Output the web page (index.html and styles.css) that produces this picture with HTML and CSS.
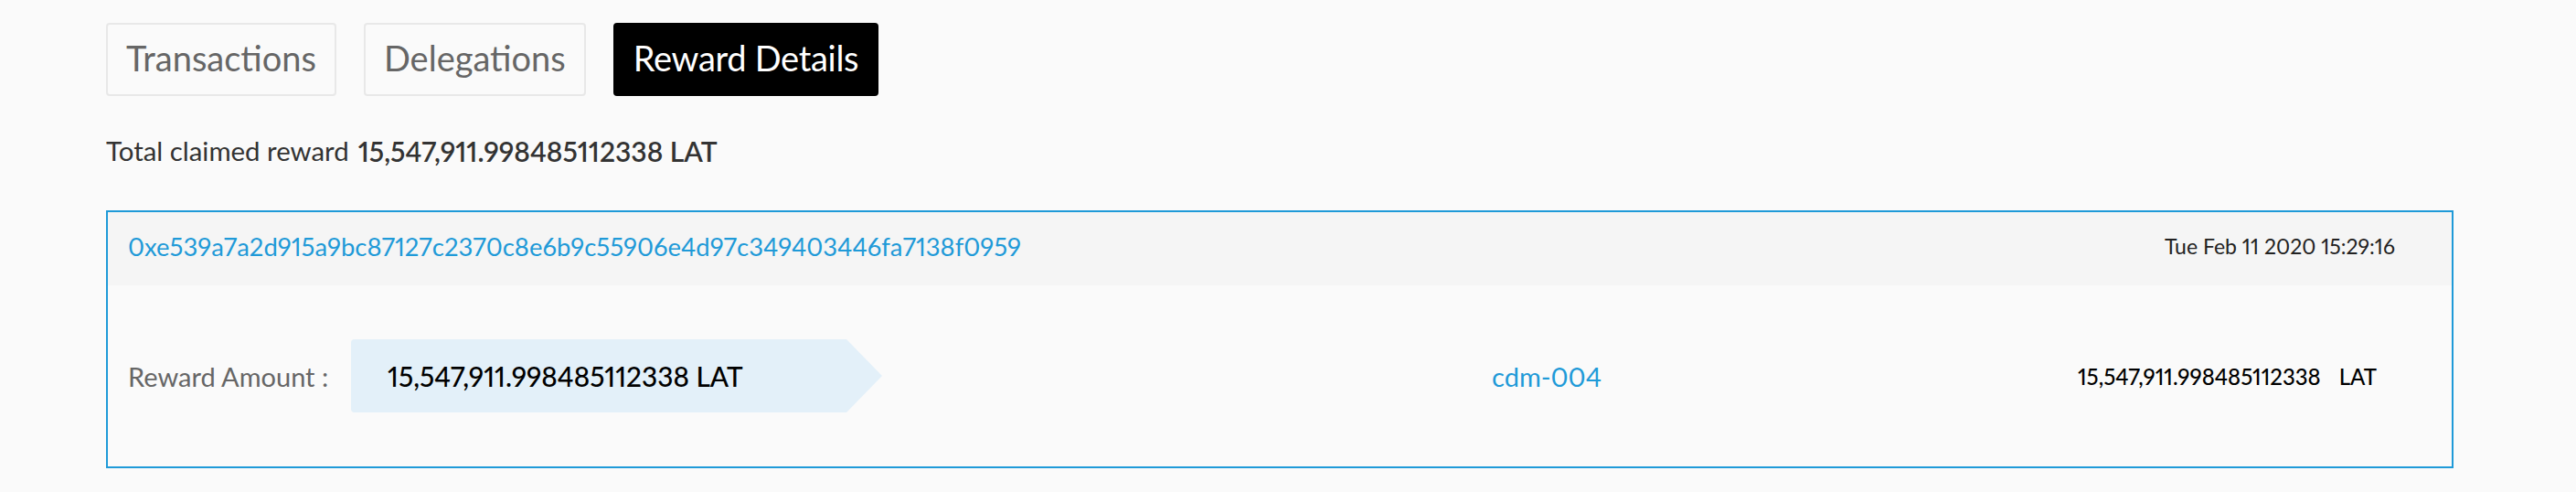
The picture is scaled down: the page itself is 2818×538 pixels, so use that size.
FILE: index.html
```html
<!DOCTYPE html>
<html lang="en">
<head>
<meta charset="utf-8">
<title>Reward Details</title>
<link rel="stylesheet" href="styles.css">
</head>
<body>
<div class="page">
  <nav class="tabs">
    <button class="tab">Transactions</button>
    <button class="tab">Delegations</button>
    <button class="tab tab--active">Reward Details</button>
  </nav>
  <div class="summary">
    <span class="summary__label">Total claimed reward</span>
    <span class="summary__value">15,547,911.998485112338 LAT</span>
  </div>
  <section class="reward-card">
    <header class="reward-card__head">
      <a class="hash">0xe539a7a2d915a9bc87127c2370c8e6b9c55906e4d97c349403446fa7138f0959</a>
      <span class="time">Tue Feb 11 2020 15:29:16</span>
    </header>
    <div class="reward-card__body">
      <span class="amount-label">Reward Amount :</span>
      <div class="amount-flag">15,547,911.998485112338 LAT</div>
      <a class="node">cdm-004</a>
      <span class="node-amount">15,547,911.998485112338<span class="unit">LAT</span></span>
    </div>
  </section>
</div>
</body>
</html>
```

FILE: styles.css
```css
html, body {
  margin: 0;
}

body {
  background: #fafafa;
  font-family: Lato, "Open Sans", sans-serif;
  font-variant-numeric: proportional-nums;
}

.page {
  padding: 25px 134px 26px 116px;
}

.tabs {
  display: flex;
  gap: 30px;
}

.tab {
  height: 80px;
  padding: 0 20px 4px;
  border: 2px solid #e8e8e8;
  border-radius: 4px;
  background: #fafafa;
  color: #666;
  font: 400 38px Lato, "Open Sans", sans-serif;
}

.tab--active {
  background: #000;
  border-color: #000;
  color: #fff;
  letter-spacing: -0.3px;
}

.summary {
  height: 125px;
  box-sizing: border-box;
  padding-bottom: 6px;
  display: flex;
  align-items: center;
  gap: 10px;
  color: #333;
}

.summary__label {
  font-size: 29.4px;
}

.summary__value {
  font-size: 30px;
  font-weight: 600;
}

.reward-card {
  border: 2px solid #1f9ad8;
}

.reward-card__head {
  height: 80px;
  box-sizing: border-box;
  padding: 0 62px 6px 22px;
  display: flex;
  align-items: center;
  justify-content: space-between;
  background: #f5f5f5;
}

.hash {
  color: #1f9ad8;
  font-size: 27.4px;
}

.time {
  font-size: 23px;
  color: #222;
}

.reward-card__body {
  height: 198px;
  display: flex;
  align-items: center;
  padding: 0 82px 0 22px;
}

.amount-label {
  width: 244px;
  font-size: 29px;
  color: #666;
}

.amount-flag {
  width: 581px;
  height: 80px;
  box-sizing: border-box;
  padding-left: 40px;
  display: flex;
  align-items: center;
  background: #e3f0f9;
  clip-path: polygon(0 0, calc(100% - 39px) 0, 100% 50%, calc(100% - 39px) 100%, 0 100%);
  border-radius: 4px 0 0 4px;
  font-size: 29.8px;
  font-weight: 500;
  color: #000;
}

.node {
  margin-left: 667px;
  color: #1f9ad8;
  font-size: 29px;
}

.node-amount {
  margin-left: auto;
  font-size: 24px;
  font-weight: 500;
  color: #000;
}

.unit {
  margin-left: 20px;
}
```
